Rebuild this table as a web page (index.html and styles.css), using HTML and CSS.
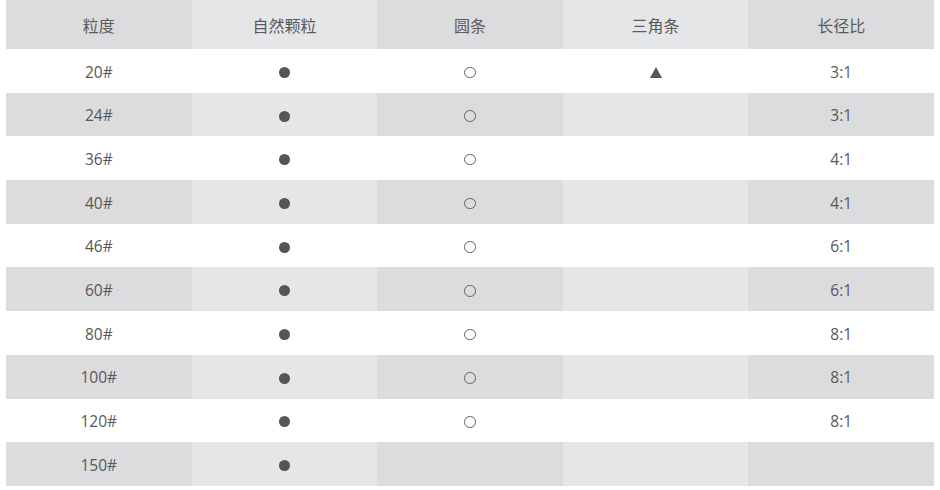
FILE: index.html
```html
<!DOCTYPE html>
<html lang="zh">
<head>
<meta charset="utf-8">
<title>粒度</title>
<link rel="stylesheet" href="styles.css">
</head>
<body>
<table class="spec">
  <thead>
    <tr><th>粒度</th><th>自然颗粒</th><th>圆条</th><th>三角条</th><th>长径比</th></tr>
  </thead>
  <tbody>
    <tr><td>20#</td><td><span class="dot"></span></td><td><span class="ring"></span></td><td><svg class="tri" viewBox="0 0 12 11"><polygon points="6,0 12,11 0,11"/></svg></td><td>3:1</td></tr>
    <tr><td>24#</td><td><span class="dot"></span></td><td><span class="ring"></span></td><td></td><td>3:1</td></tr>
    <tr><td>36#</td><td><span class="dot"></span></td><td><span class="ring"></span></td><td></td><td>4:1</td></tr>
    <tr><td>40#</td><td><span class="dot"></span></td><td><span class="ring"></span></td><td></td><td>4:1</td></tr>
    <tr><td>46#</td><td><span class="dot"></span></td><td><span class="ring"></span></td><td></td><td>6:1</td></tr>
    <tr><td>60#</td><td><span class="dot"></span></td><td><span class="ring"></span></td><td></td><td>6:1</td></tr>
    <tr><td>80#</td><td><span class="dot"></span></td><td><span class="ring"></span></td><td></td><td>8:1</td></tr>
    <tr><td>100#</td><td><span class="dot"></span></td><td><span class="ring"></span></td><td></td><td>8:1</td></tr>
    <tr><td>120#</td><td><span class="dot"></span></td><td><span class="ring"></span></td><td></td><td>8:1</td></tr>
    <tr><td>150#</td><td><span class="dot"></span></td><td></td><td></td><td></td></tr>
  </tbody>
</table>
</body>
</html>
```
FILE: styles.css
```css
html, body {
  margin: 0;
  padding: 0;
  background: #ffffff;
}
body {
  padding: 0 6px;
  font-family: "Open Sans", "Noto Sans CJK SC", sans-serif;
  color: #58585a;
}
.spec {
  width: 928px;
  border-collapse: collapse;
  table-layout: fixed;
}
.spec th,
.spec td {
  padding: 0;
  text-align: center;
  vertical-align: middle;
}
.spec th {
  height: 49px;
  font-family: "Noto Sans CJK SC", sans-serif;
  font-weight: 400;
  font-size: 16px;
  color: #5a5a5c;
}
.spec td {
  height: 43.7px;
  font-size: 15.5px;
  line-height: 1;
  padding-top: 3px;
  box-sizing: border-box;
}
.spec thead th:nth-child(odd),
.spec tbody tr:nth-child(even) td:nth-child(odd) {
  background: #dcdcde;
}
.spec thead th:nth-child(even),
.spec tbody tr:nth-child(even) td:nth-child(even) {
  background: #e5e6e8;
}
.dot {
  display: block;
  margin: 0 auto;
  width: 11px;
  height: 11px;
  border-radius: 50%;
  background: #555557;
}
.ring {
  display: block;
  margin: 0 auto;
  width: 11.5px;
  height: 11.5px;
  border-radius: 50%;
  border: 1.3px solid #606066;
  box-sizing: border-box;
}
.tri {
  display: block;
  margin: 0 auto;
  width: 12px;
  height: 11px;
  fill: #555557;
}
```
